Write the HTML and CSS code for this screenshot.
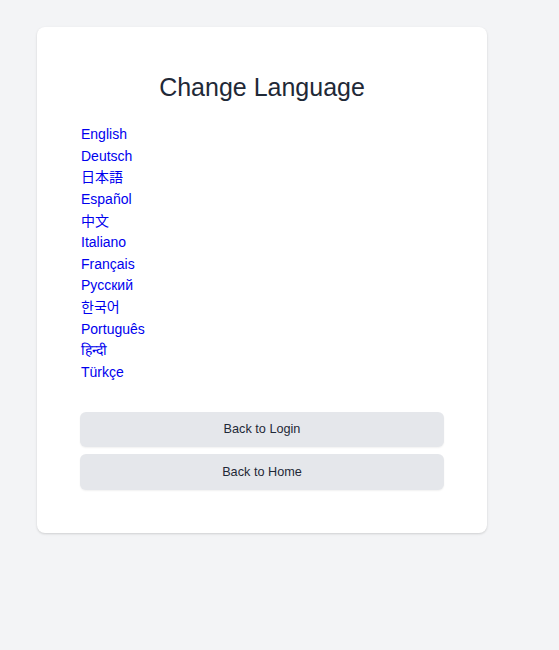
FILE: index.html
```html
<!DOCTYPE html>
<html lang="en">
<head>
<meta charset="utf-8">
<title>Change Language</title>
<link rel="stylesheet" href="styles.css">
</head>
<body>
<main class="page">
  <section class="card">
    <h1 class="title">Change Language</h1>
    <ul class="langs">
      <li><a href="#">English</a></li>
      <li><a href="#">Deutsch</a></li>
      <li><a href="#" lang="ja">日本語</a></li>
      <li><a href="#">Español</a></li>
      <li><a href="#" lang="zh">中文</a></li>
      <li><a href="#">Italiano</a></li>
      <li><a href="#">Français</a></li>
      <li><a href="#">Русский</a></li>
      <li><a href="#" lang="ko">한국어</a></li>
      <li><a href="#">Português</a></li>
      <li><a href="#" lang="hi">हिन्दी</a></li>
      <li><a href="#">Türkçe</a></li>
    </ul>
    <div class="actions">
      <button class="btn" type="button">Back to Login</button>
      <button class="btn" type="button">Back to Home</button>
    </div>
  </section>
</main>
</body>
</html>
```
FILE: styles.css
```css
html, body {
  margin: 0;
  padding: 0;
  background: #f3f4f6;
  font-family: "Liberation Sans", Arial, "Noto Sans CJK SC", "Noto Sans CJK KR", sans-serif;
  height: 100%;
}
.page {
  padding: 27px 0 0 37px;
}
.card {
  width: 450px;
  box-sizing: border-box;
  background: #fff;
  border-radius: 8px;
  box-shadow: 0 1px 3px rgba(0,0,0,0.1), 0 1px 2px rgba(0,0,0,0.06);
  padding: 46px 43px 43px;
}
.title {
  margin: 0 0 22px;
  text-align: center;
  font-size: 25px;
  font-weight: 400;
  color: #1f2937;
  line-height: 29px;
}
.langs {
  list-style: none;
  margin: 0;
  padding: 0 0 0 1px;
}
.langs li {
  line-height: 21.64px;
  font-size: 14px;
}
.langs a {
  color: #0000ee;
  text-decoration: none;
}
.actions {
  margin-top: 28px;
  display: flex;
  flex-direction: column;
  gap: 7px;
}
.btn {
  height: 35.5px;
  border: none;
  border-radius: 6px;
  background: #e5e7eb;
  color: #1f2937;
  font-family: inherit;
  font-size: 12.7px;
  box-shadow: 0 1px 2px rgba(0,0,0,0.06);
  cursor: pointer;
}
```
